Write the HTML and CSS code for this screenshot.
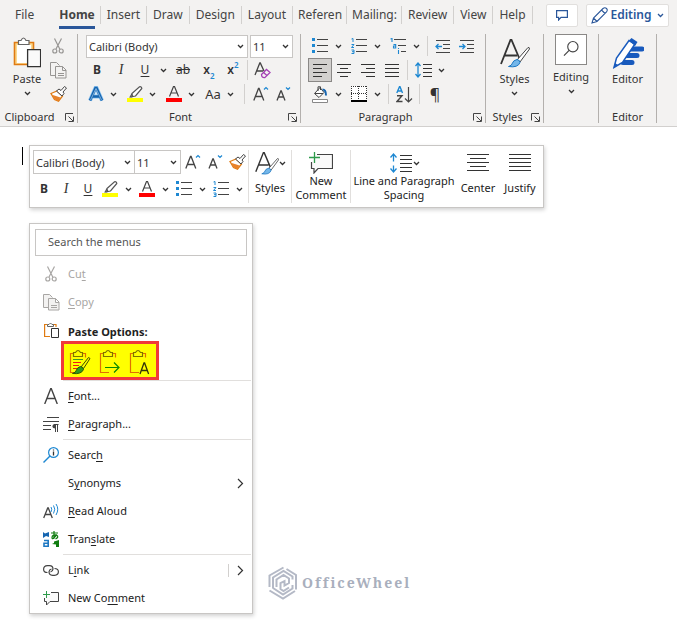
FILE: index.html
```html
<!DOCTYPE html>
<html lang="en">
<head>
<meta charset="utf-8">
<title>Document</title>
<link rel="stylesheet" href="styles.css">
</head>
<body>
<svg class="sprite" aria-hidden="true">
  <symbol id="chev" viewBox="0 0 7 5"><path d="M1 1l2.500 2.500L6 1" fill="none" stroke="#333" stroke-width="1.300"/></symbol>
  <symbol id="launch" viewBox="0 0 9 9"><path d="M.5 7.500V.5H8M3.500 3.500L8 8M8.500 3.500v5h-5" fill="none" stroke="#444"/></symbol>
  <symbol id="cut" viewBox="0 0 12 16"><g fill="none" stroke="currentColor" stroke-width="1.200"><path d="M2.500.5l5.500 11M9.500.5L4 11"/><circle cx="2.800" cy="13" r="2"/><circle cx="9.200" cy="13" r="2"/></g></symbol>
  <symbol id="copy" viewBox="0 0 17 17"><g fill="#f3f2f1" stroke="currentColor"><path d="M6 13.500H.5V.5h6l3 3"/><path d="M5.500 4.500h7l3.500 3.500v8H5.500zM12.500 4.500v4H16M8 11.500h6M8 13.500h6"/></g></symbol>
  <symbol id="brush" viewBox="0 0 17 16"><path d="M1 7.500l6-2.500 5.500 5L8.500 15.200 4.500 13.500z" fill="#fff" stroke="#e07b12" stroke-width="1.300"/><path d="M2 8.800L10.500 11.500l-2 3.500-4-1.500z" fill="#e8822a"/><path d="M6.500 5L9 3l2 1.500 3.500-4 2 1.500-3.500 4 1 1.500-2 2.500z" fill="#fff" stroke="#444"/></symbol>
  <symbol id="pen" viewBox="0 0 16 16"><path d="M5 7.500L12.500.8q2-.5 2.300 1.700L8.500 10l-3 .5zM5 7.500L3.500 10.500l2 .5" fill="#fff" stroke="#555" stroke-width="1.200"/><path d="M3.500 10L2 11.500h3z" fill="#555"/><path d="M0 12h16v4H0z" fill="#ff0"/></symbol>
  <symbol id="fontcolor" viewBox="0 0 16 16"><path d="M3.500 10.500L7.500.5h1l4 10M5 7h6" fill="none" stroke="#444" stroke-width="1.200"/><path d="M0 12h16v4H0z" fill="#f00"/></symbol>
  <symbol id="bullets" viewBox="0 0 16 16"><path d="M0 0h3v3H0zM0 6h3v3H0zM0 12h3v3H0z" fill="#1e88d2"/><path d="M5 1.500h11M5 7.500h11M5 13.500h11" stroke="#444"/></symbol>
  <symbol id="numbers" viewBox="0 0 16 16"><path d="M.5 1L2 .5V4M.5 6.500H3L.5 9.500H3M.5 12H3v3.500H.5M1 13.700h2" fill="none" stroke="#1e88d2" stroke-width="1"/><path d="M5 1.500h11M5 7.500h11M5 13.500h11" stroke="#444"/></symbol>
  <symbol id="grow" viewBox="0 0 16 16"><path d="M.8 14.500L5.500 2.500h.6l4.700 12M2.500 10.500h6.700" fill="none" stroke="#444" stroke-width="1.300"/><path d="M11 3.500l2-2 2 2" fill="none" stroke="#1e88d2" stroke-width="1.200"/></symbol>
  <symbol id="shrink" viewBox="0 0 16 16"><path d="M2 14.500L5.800 5h.5l3.700 9.500M3.500 11h5" fill="none" stroke="#444" stroke-width="1.300"/><path d="M11 1.500l2 2 2-2" fill="none" stroke="#1e88d2" stroke-width="1.200"/></symbol>
  <symbol id="styles" viewBox="0 0 30 30"><path d="M1 26L10.500 2h1L20 22M5 17.500h12" fill="none" stroke="#333" stroke-width="1.800"/><path d="M17 22L28 9.500q1.500-.5 1.500 1.500L20 24z" fill="#fff" stroke="#444"/><path d="M17 21.500q3 .5 3 3Q18 30 8.500 28.500q3.500-1 4-3.500t4.500-3.500z" fill="#74b7ea" stroke="#1e78c2"/></symbol>
  <symbol id="spacing" viewBox="0 0 24 20"><path d="M4.500 1v18M1.500 4.500l3-3.500 3 3.500M1.500 15.500l3 3.500 3-3.500" fill="none" stroke="#1e88d2" stroke-width="1.300"/><path d="M3 8.500h3v4H3z" fill="#fff"/><path d="M11 2.500h12M11 6.500h12M11 10.500h12M11 14.500h12M11 18.500h12" stroke="#333"/></symbol>
  <symbol id="comment" viewBox="0 0 24 22"><path d="M8 2.500h15.500v14H9l-4 4.500v-4.500H2.500V10" fill="#fafafa" stroke="#444" stroke-width="1.200"/><path d="M5.500 0v11M0 5.500h11" stroke="#2e9b4b" stroke-width="1.300"/></symbol>
  <symbol id="arrow" viewBox="0 0 7 11"><path d="M1 1l4.500 4.500L1 10" fill="none" stroke="#333" stroke-width="1.200"/></symbol>
  <symbol id="board" viewBox="0 0 22 26"><path d="M4.500 4.500H1.500v19H10M13 4.500h3.500v4" fill="none" stroke="#e07000" stroke-width="1.200"/><path d="M4.500 7.500v-4h2q2.500-4 5 0h2v4z" fill="none" stroke="#7f7200" stroke-width="1.200"/></symbol>
</svg>

<header class="ribbon">
  <nav class="tabs">
    <a href="#" class="tab">File</a>
    <a href="#" class="tab current"><span>Home</span></a>
    <a href="#" class="tab">Insert</a>
    <a href="#" class="tab">Draw</a>
    <a href="#" class="tab">Design</a>
    <a href="#" class="tab">Layout</a>
    <a href="#" class="tab tight">Referen</a>
    <a href="#" class="tab tight">Mailing:</a>
    <a href="#" class="tab">Review</a>
    <a href="#" class="tab">View</a>
    <a href="#" class="tab">Help</a>
    <button class="note-btn" aria-label="Comments"><svg width="12" height="11" viewBox="0 0 12 11"><path d="M.6.6h10.800v6.800H5L2.600 10V7.400h-2z" fill="none" stroke="#2b579a" stroke-width="1.200"/></svg></button>
    <button class="mode-btn"><svg width="17" height="17" viewBox="0 0 17 17"><path d="M1 16l1.500-5L12 1.500q2-1.500 3.500 0t0 3.500L6 14.500zM2.500 11L6 14.500M10.500 3L14 6.500" fill="none" stroke="#2b579a" stroke-width="1.100"/></svg>Editing<svg class="chev-blue" width="7" height="5" viewBox="0 0 7 5"><path d="M1 1l2.500 2.500L6 1" fill="none" stroke="#2b579a" stroke-width="1.300"/></svg></button>
  </nav>

  <div class="groups">
    <section class="group clipboard">
      <div class="body">
        <button class="big paste">
          <svg width="28" height="32" viewBox="0 0 28 32"><path d="M1.500 5.500h19v22h-19z" fill="#fbd98f" stroke="#e07b12" stroke-width="1.600"/><path d="M4 8h14v18H4z" fill="#fff"/><path d="M5.500 7.500v-4H8q2.500-5 5 0h3v4z" fill="#fff" stroke="#666" stroke-width="1.200"/><path d="M14.600 12.600h13v17h-13z" fill="#fafafa" stroke="#333" stroke-width="1.300"/></svg>
          <span>Paste</span><svg width="7" height="5"><use href="#chev"/></svg>
        </button>
        <div class="stack">
          <button class="tool dim" aria-label="Cut"><svg width="12" height="16"><use href="#cut"/></svg></button>
          <button class="tool dim" aria-label="Copy"><svg width="17" height="17"><use href="#copy"/></svg></button>
          <button class="tool" aria-label="Format painter"><svg width="17" height="16"><use href="#brush"/></svg></button>
        </div>
      </div>
      <h2>Clipboard<button class="launcher" aria-label="Clipboard settings"><svg width="9" height="9"><use href="#launch"/></svg></button></h2>
    </section>

    <section class="group font">
      <div class="body rows">
        <div class="row">
          <div class="combo wide"><input aria-label="Font" value="Calibri (Body)"><svg width="7" height="5"><use href="#chev"/></svg></div>
          <div class="combo size"><input aria-label="Font size" value="11"><svg width="7" height="5"><use href="#chev"/></svg></div>
        </div>
        <div class="row">
          <button class="tool b">B</button><button class="tool i">I</button><button class="tool u">U</button>
          <button class="drop" aria-label="Underline styles"><svg width="7" height="5"><use href="#chev"/></svg></button>
          <button class="tool strike">ab</button>
          <button class="tool script">x<sub>2</sub></button><button class="tool script">x<sup>2</sup></button>
          <i class="bar"></i>
          <button class="tool" aria-label="Clear formatting"><svg width="17" height="17" viewBox="0 0 17 17"><path d="M1 13L5.800 1h.5l3.700 8M3 9h6" fill="none" stroke="#444" stroke-width="1.300"/><path d="M7.500 12.500l5-5 3.500 3-5 5q-3.500.5-3.500-3zM9.500 10.500l3.500 3" fill="#f3f2f1" stroke="#a43fb5" stroke-width="1.300"/></svg></button>
        </div>
        <div class="row split">
          <button class="tool" aria-label="Text effects"><svg width="16" height="16" viewBox="0 0 16 16"><path d="M2 14.500L7.500 2h1L14 14.500M4.500 10.500h7" fill="none" stroke="#8cc3f0" stroke-width="4"/><path d="M2 14.500L7.500 2h1L14 14.500M4.500 10.500h7" fill="none" stroke="#1565b0" stroke-width="2.600"/><path d="M2.500 14L8 2.500 13.500 14" fill="none" stroke="#e8f4ff" stroke-width=".5"/></svg></button><button class="drop" aria-label="Text effect list"><svg width="7" height="5"><use href="#chev"/></svg></button>
          <button class="tool" aria-label="Highlight"><svg width="16" height="16"><use href="#pen"/></svg></button><button class="drop" aria-label="Highlight colors"><svg width="7" height="5"><use href="#chev"/></svg></button>
          <button class="tool" aria-label="Font color"><svg width="16" height="16"><use href="#fontcolor"/></svg></button><button class="drop" aria-label="Font colors"><svg width="7" height="5"><use href="#chev"/></svg></button>
          <button class="tool case">Aa</button><button class="drop" aria-label="Change case"><svg width="7" height="5"><use href="#chev"/></svg></button>
          <i class="bar"></i>
          <button class="tool" aria-label="Grow font"><svg width="16" height="16"><use href="#grow"/></svg></button><button class="tool" aria-label="Shrink font"><svg width="16" height="16"><use href="#shrink"/></svg></button>
        </div>
      </div>
      <h2>Font<button class="launcher" aria-label="Font settings"><svg width="9" height="9"><use href="#launch"/></svg></button></h2>
    </section>

    <section class="group para">
      <div class="body rows">
        <div class="row">
          <button class="tool" aria-label="Bullets"><svg width="16" height="16"><use href="#bullets"/></svg></button><button class="drop" aria-label="Bullet library"><svg width="7" height="5"><use href="#chev"/></svg></button>
          <button class="tool gap" aria-label="Numbering"><svg width="16" height="16"><use href="#numbers"/></svg></button><button class="drop" aria-label="Numbering library"><svg width="7" height="5"><use href="#chev"/></svg></button>
          <button class="tool gap" aria-label="Multilevel list"><svg width="16" height="16" viewBox="0 0 16 16"><path d="M.5 1L2 .5V4M3.500 6.500h2.200V10H3.500V8h2M8.500 12v4M8.500 10v1" fill="none" stroke="#1e88d2" stroke-width="1.100"/><path d="M4 1.500h12M8 7.500h8M11 13.500h5" stroke="#444"/></svg></button><button class="drop" aria-label="List library"><svg width="7" height="5"><use href="#chev"/></svg></button>
          <i class="bar wide-bar"></i>
          <button class="tool" aria-label="Decrease indent"><svg width="16" height="14" viewBox="0 0 16 14"><path d="M1 1.500h14M8 5.500h7M8 9.500h7M1 13.500h14" stroke="#444"/><path d="M7 7.500H1M3.500 5L1 7.500 3.500 10" fill="none" stroke="#1e88d2" stroke-width="1.300"/></svg></button>
          <button class="tool" aria-label="Increase indent"><svg width="16" height="14" viewBox="0 0 16 14"><path d="M1 1.500h14M8 5.500h7M8 9.500h7M1 13.500h14" stroke="#444"/><path d="M0 7.500h6M3.500 5L6 7.500 3.500 10" fill="none" stroke="#1e88d2" stroke-width="1.300"/></svg></button>
        </div>
        <div class="row">
          <button class="tool on" aria-label="Align left"><svg width="14" height="14" viewBox="0 0 14 14"><path d="M0 1.500h14M0 5.500h9M0 9.500h14M0 13.500h9" stroke="#333"/></svg></button>
          <button class="tool" aria-label="Center"><svg width="14" height="14" viewBox="0 0 14 14"><path d="M0 1.500h14M3 5.500h8M0 9.500h14M3 13.500h8" stroke="#333"/></svg></button>
          <button class="tool" aria-label="Align right"><svg width="14" height="14" viewBox="0 0 14 14"><path d="M0 1.500h14M5 5.500h9M0 9.500h14M5 13.500h9" stroke="#333"/></svg></button>
          <button class="tool" aria-label="Justify"><svg width="14" height="14" viewBox="0 0 14 14"><path d="M0 1.500h14M0 5.500h14M0 9.500h14M0 13.500h14" stroke="#333"/></svg></button>
          <i class="bar"></i>
          <button class="tool" aria-label="Line spacing"><svg width="17" height="16" viewBox="0 0 17 16"><path d="M3 1v14M.5 4L3 1l2.500 3M.5 12L3 15l2.500-3" fill="none" stroke="#1e88d2" stroke-width="1.300"/><path d="M8 2.500h9M8 6.500h9M8 10.500h9M8 14.500h9" stroke="#333"/></svg></button><button class="drop" aria-label="Spacing options"><svg width="7" height="5"><use href="#chev"/></svg></button>
        </div>
        <div class="row">
          <button class="tool" aria-label="Shading"><svg width="16" height="17" viewBox="0 0 16 17"><path d="M2.500 7.500l5.500-6 4 5-5 5zM6 5V.8h2.500V4M3 7.500h8" fill="#fff" stroke="#444"/><path d="M10.500 3.500q3.500 0 3.500 6" fill="none" stroke="#1565b0" stroke-width="2"/><path d="M.5 13.500h15v3H.5z" fill="#fff" stroke="#888"/></svg></button><button class="drop" aria-label="Shading colors"><svg width="7" height="5"><use href="#chev"/></svg></button>
          <button class="tool gap" aria-label="Borders"><svg width="16" height="16" viewBox="0 0 16 16"><path d="M0 0h16v15H0z" fill="#fff"/><path d="M0 .5h16M0 7.500h16M.5 0v15M15.500 0v15M7.500 0v15" stroke="#333" stroke-dasharray="1 1"/><path d="M0 15h16" stroke="#000" stroke-width="2"/></svg></button><button class="drop" aria-label="Border options"><svg width="7" height="5"><use href="#chev"/></svg></button>
          <i class="bar wide-bar"></i>
          <button class="tool" aria-label="Sort"><svg width="17" height="17" viewBox="0 0 17 17"><path d="M.8 7L3.500.8h.5L6.500 7M1.500 5h4.500" fill="none" stroke="#1e88d2" stroke-width="1.400"/><path d="M1 9.700h5L1 15.500h5.500" fill="none" stroke="#444" stroke-width="1.400"/><path d="M12.500 1v15M9 12.500l3.500 3.500 3.500-3.500" fill="none" stroke="#444" stroke-width="1.200"/></svg></button>
          <i class="bar"></i>
          <button class="tool pilcrow">¶</button>
        </div>
      </div>
      <h2>Paragraph<button class="launcher" aria-label="Paragraph settings"><svg width="9" height="9"><use href="#launch"/></svg></button></h2>
    </section>

    <section class="group styles">
      <div class="body"><button class="big"><svg width="30" height="32"><use href="#styles"/></svg><span>Styles</span><svg width="7" height="5"><use href="#chev"/></svg></button></div>
      <h2>Styles<button class="launcher" aria-label="Styles settings"><svg width="9" height="9"><use href="#launch"/></svg></button></h2>
    </section>
    <section class="group editing">
      <div class="body"><button class="big boxed"><svg class="frame" width="32" height="31" viewBox="0 0 32 31"><circle cx="18" cy="12.500" r="5.500" fill="none" stroke="#444" stroke-width="1.200"/><path d="M14 16.500L8.500 22" stroke="#444" stroke-width="1.300"/></svg><span>Editing</span><svg width="7" height="5"><use href="#chev"/></svg></button></div>
    </section>
    <section class="group editor">
      <div class="body"><button class="big"><svg width="32" height="32" viewBox="0 0 32 32"><path d="M19 12h11M15 18.500h10M11 25.500h9" stroke="#185abd" stroke-width="5" stroke-linecap="round"/><path d="M2 30.500L4.500 21 17 3.500 23 7 10.500 25.500z" fill="#fff" stroke="#185abd" stroke-width="1.500"/><path d="M17 3.500l2.500-2.500 6 4-2.500 4z" fill="#185abd"/><path d="M1.500 31l1.500-5 3 2z" fill="#185abd"/></svg><span>Editor</span></button></div>
      <h2>Editor</h2>
    </section>
  </div>
</header>

<main class="page">
  <div class="line">
    <i class="caret"></i>
    <div class="mini">
      <div class="mini-tools">
        <div class="row">
          <div class="combo wide"><input aria-label="Font" value="Calibri (Body)"><svg width="7" height="5"><use href="#chev"/></svg></div>
          <div class="combo size"><input aria-label="Font size" value="11"><svg width="7" height="5"><use href="#chev"/></svg></div>
          <button class="tool" aria-label="Grow font"><svg width="16" height="16"><use href="#grow"/></svg></button><button class="tool" aria-label="Shrink font"><svg width="16" height="16"><use href="#shrink"/></svg></button><button class="tool" aria-label="Format painter"><svg width="17" height="16"><use href="#brush"/></svg></button>
        </div>
        <div class="row">
          <button class="tool b">B</button><button class="tool i">I</button><button class="tool u">U</button>
          <button class="tool" aria-label="Highlight"><svg width="16" height="16"><use href="#pen"/></svg></button><button class="drop" aria-label="Highlight colors"><svg width="7" height="5"><use href="#chev"/></svg></button>
          <button class="tool" aria-label="Font color"><svg width="16" height="16"><use href="#fontcolor"/></svg></button><button class="drop" aria-label="Font colors"><svg width="7" height="5"><use href="#chev"/></svg></button>
          <button class="tool" aria-label="Bullets"><svg width="16" height="16"><use href="#bullets"/></svg></button><button class="drop" aria-label="Bullet library"><svg width="7" height="5"><use href="#chev"/></svg></button>
          <button class="tool" aria-label="Numbering"><svg width="16" height="16"><use href="#numbers"/></svg></button><button class="drop" aria-label="Numbering library"><svg width="7" height="5"><use href="#chev"/></svg></button>
        </div>
      </div>
      <button class="card c-styles"><span class="pic"><svg width="24" height="24"><use href="#styles"/></svg><svg width="7" height="5"><use href="#chev"/></svg></span><span class="cap">Styles</span></button>
      <button class="card c-new"><span class="pic"><svg width="24" height="22"><use href="#comment"/></svg></span><span class="cap">New<br>Comment</span></button>
      <button class="card c-line"><span class="pic"><svg width="24" height="20"><use href="#spacing"/></svg><svg width="7" height="5"><use href="#chev"/></svg></span><span class="cap">Line and Paragraph<br>Spacing</span></button>
      <button class="card c-last"><span class="pic"><svg width="22" height="18" viewBox="0 0 22 18"><path d="M0 .5h22M3 4.500h16M0 8.500h22M3 12.500h16M0 16.500h22" stroke="#333"/></svg></span><span class="cap">Center</span></button>
      <button class="card c-last"><span class="pic"><svg width="22" height="18" viewBox="0 0 22 18"><path d="M0 .5h22M0 4.500h22M0 8.500h22M0 12.500h22M0 16.500h22" stroke="#333"/></svg></span><span class="cap">Justify</span></button>
    </div>
  </div>

  <div class="lower">
    <div class="menu">
      <input class="search" placeholder="Search the menus" aria-label="Search the menus">
      <button class="item off"><span class="ico"><svg width="12" height="16"><use href="#cut"/></svg></span><span>Cu<u>t</u></span></button>
      <button class="item off"><span class="ico"><svg width="17" height="17"><use href="#copy"/></svg></span><span><u>C</u>opy</span></button>
      <div class="item title"><span class="ico"><svg width="15" height="16" viewBox="0 0 15 16"><path d="M3.500 2.500H.6v12H6M9 2.500h3V5" fill="none" stroke="#e07b12" stroke-width="1.200"/><path d="M3.500 4.500v-2H5q1.500-3 3 0h1.500v2z" fill="#fff" stroke="#666"/><path d="M7.500 6.500h7v9h-7z" fill="#fff" stroke="#333"/></svg></span><span>Paste Options:</span></div>
      <div class="pastes">
        <button aria-label="Keep source formatting"><svg width="22" height="26" viewBox="0 0 22 26"><use href="#board" width="22" height="26"/><path d="M4 10.500h10" stroke="#3f9a20"/><path d="M4 13.500h8M4 16.500h6M4 19.500h4" stroke="#f01818"/><path d="M12 18l7.500-9.500 1.500 1-6.500 10z" fill="#ff0" stroke="#3c4a00"/><path d="M11.500 17.500q3 .5 3 3-2 5-11 4 3.500-1 4-3.500t4-3.500z" fill="#2f9a1f" stroke="#2a5a00"/></svg></button>
        <button aria-label="Merge formatting"><svg width="22" height="26" viewBox="0 0 22 26"><use href="#board" width="22" height="26"/><path d="M6 18.500h14M15 13.500l5 5-5 5" fill="none" stroke="#0a8a00" stroke-width="1.200"/></svg></button>
        <button aria-label="Keep text only"><svg width="22" height="26" viewBox="0 0 22 26"><use href="#board" width="22" height="26"/><path d="M11 25l4-11h.6l4 11M12.500 21.500h6" fill="none" stroke="#33330a" stroke-width="1.300"/></svg></button>
      </div>
      <hr>
      <button class="item"><span class="ico"><svg width="14" height="16" viewBox="0 0 14 16"><path d="M.7 16L6.700.7h.6L13.300 16M3 10.500h8" fill="none" stroke="#444" stroke-width="1.400"/></svg></span><span><u>F</u>ont...</span></button>
      <button class="item"><span class="ico"><svg width="16" height="15" viewBox="0 0 16 15"><path d="M4 .5h12M0 4.500h16M0 8.500h8M0 12.500h8" stroke="#444"/><path d="M15.500 7.500h-4.500M12.500 7.500v7.500M14.500 7.500v7.500" fill="none" stroke="#444"/><path d="M12.500 7q-3 0-3 2.200t3 2.300z" fill="#444"/></svg></span><span><u>P</u>aragraph...</span></button>
      <hr>
      <button class="item"><span class="ico"><svg width="16" height="16" viewBox="0 0 16 16"><circle cx="10.500" cy="5.500" r="4.900" fill="#fff" stroke="#1e88d2" stroke-width="1.200"/><path d="M7 9L.5 15.500" stroke="#1e88d2" stroke-width="1.400"/><path d="M10.500 2.500v1M10.500 4.500v4" stroke="#333" stroke-width="1.300"/></svg></span><span>Searc<u>h</u></span></button>
      <button class="item"><span class="ico"></span><span>S<u>y</u>nonyms</span><svg class="more" width="7" height="11"><use href="#arrow"/></svg></button>
      <button class="item"><span class="ico"><svg width="16" height="16" viewBox="0 0 16 16"><path d="M.7 15L4.700 5h.6l4 10M2.200 11.500h5.600" fill="none" stroke="#444" stroke-width="1.300"/><path d="M8 4q1.500 2 0 5M10.500 2.500q2.500 3.500 0 8M13 1q3.500 5 0 11" fill="none" stroke="#1e88d2"/></svg></span><span><u>R</u>ead Aloud</span></button>
      <button class="item"><span class="ico"><svg width="16" height="16" viewBox="0 0 16 16"><path d="M0 1l2 1.500L6 1v5l-3-1-3 2z" fill="#1565b0"/><path d="M1 9.500h4.200v5.700H1v-3h4" fill="none" stroke="#1e78c2" stroke-width="1.600"/><path d="M8 2h7M11 0v8M14 4q-5-.5-5 2.500T13.500 4q3 2-1 4" fill="none" stroke="#107c10" stroke-width="1.200"/><path d="M16 9l-5 1.500v1.500l-2 1 4 .5V16h3z" fill="#107c10"/></svg></span><span>Tran<u>s</u>late</span></button>
      <hr>
      <button class="item"><span class="ico"><svg width="16" height="11" viewBox="0 0 16 11"><path d="M4.500 7.500Q.6 7.500.6 4.200T4.500.7h2q3.500 0 3.500 3.500-.3 2.300-2.500 2.800M11.500 3.500q3.900 0 3.900 3.300t-3.900 3.500h-2Q6 10.300 6 6.800q.3-2.300 2.500-2.800" fill="none" stroke="#444" stroke-width="1.200"/></svg></span><span>L<u>i</u>nk</span><i class="rule"></i><svg class="more" width="7" height="11"><use href="#arrow"/></svg></button>
      <button class="item"><span class="ico"><svg width="16" height="15" viewBox="0 0 16 15"><path d="M8 1.500h7.500v9H7L3.500 14v-3.500h-2V7" fill="#fafafa" stroke="#444"/><path d="M3.500 0v7M0 3.500h7" stroke="#2e9b4b"/></svg></span><span>New Co<u>m</u>ment</span></button>
    </div>
    <div class="brand">
      <svg width="30" height="34" viewBox="0 0 30 34"><g fill="none" stroke="#b4b9c6" stroke-width="2"><path d="M1.500 21V9.500L15.500 1.500M18.500 3L28 9v14.500"/><path d="M1.500 24.500L15 32.500l12-7.500"/><path d="M5 22.500V11.500L15.500 5l9 5.500v3"/><path d="M5 22l10 6.500 9.500-6V19"/><path d="M8.500 21v-7.500L15.500 9l5.500 3.500v4.500l-4.500 2.500v-4.500l-4 2v6l3 2 5.500-3.500"/></g></svg>
      <span>OfficeWheel</span>
    </div>
  </div>
</main>
</body>
</html>
```

FILE: styles.css
```css
* { box-sizing: border-box; }
body {
  margin: 0;
  background: #fff;
  color: #333;
  font: 11px/14px "Noto Sans", "Open Sans", sans-serif;
}
svg { display: block; flex: none; }
.sprite { position: absolute; width: 0; height: 0; }
button {
  display: flex;
  align-items: center;
  justify-content: center;
  padding: 0;
  border: 0;
  background: none;
  color: inherit;
  font: inherit;
}
input { font: inherit; color: inherit; outline: 0; }
u { text-underline-offset: 2px; }

/* Ribbon */
.ribbon { background: #f3f2f1; border-bottom: 1px solid #d2d0ce; }
.tabs {
  display: flex;
  align-items: center;
  height: 30px;
  padding-left: 9px;
  color: #444;
  font-size: 12px;
  line-height: 16px;
}
.tab {
  height: 18px;
  padding: 1px 6px;
  border-right: 1px solid #d2d0ce;
  color: inherit;
  text-decoration: none;
  white-space: nowrap;
}
.tab:first-child { border: 0; margin-right: 14px; }
.tab.current { padding: 1px 5px; font-weight: 700; }
.tab.current span { display: block; padding-bottom: 3px; border-bottom: 3px solid #2b579a; }
.tab.tight { padding: 1px 4px 1px 5px; }
.note-btn, .mode-btn { height: 23px; background: #fff; border: 1px solid #e1dfdd; border-radius: 2px; }
.note-btn { width: 32px; margin-left: 13px; }
.mode-btn { width: 83px; margin-left: 8px; gap: 3px; color: #2b579a; font-weight: 600; }
.mode-btn .chev-blue { margin-left: 2px; }

.groups { display: flex; padding: 4px 0 3px; }
.group {
  display: flex;
  flex-direction: column;
  height: 89px;
  border-right: 1px solid #b3b0ad;
}
.group .body { display: flex; flex: 1; }
.group h2 {
  position: relative;
  margin: 0;
  font-size: 11px;
  font-weight: 400;
  line-height: 12px;
  text-align: center;
}
.launcher { position: absolute; right: 3px; bottom: 1px; }
.clipboard { width: 78px; }
.clipboard h2 { padding-right: 18px; }
.font { width: 223px; }
.font h2 { padding-right: 17px; }
.para { width: 185px; }
.para h2 { padding-right: 15px; }
.styles { width: 58px; }
.styles h2 { padding-right: 14px; }
.editing { width: 55px; }
.editor { width: 58px; }
.big { flex: 1; flex-direction: column; justify-content: flex-start; gap: 3px; padding-top: 3px; }
.boxed { gap: 5px; padding-top: 0; }
.frame { background: #fff; border: 1px solid #8a8886; }
.paste { padding-left: 12px; }
.stack { width: 35px; padding-right: 3px; }
.stack .tool { width: 32px; }
.big span { line-height: 14px; margin-bottom: 2px; }
.boxed span { margin-bottom: 0; }
.dim { color: #979593; }

.rows { flex-direction: column; padding-left: 7px; }
.row { display: flex; align-items: center; height: 24px; }
.tool { width: 24px; height: 24px; flex: none; }
.drop { width: 12px; height: 20px; flex: none; }
.gap { margin-left: 3px; }
.bar { width: 1px; height: 20px; margin: 0 2px; background: #d2d0ce; }
.para .bar { margin: 0 3px; }
.para .wide-bar { margin-left: 5px; }
.b { font-size: 12px; font-weight: 700; }
.i { font: italic 14px "Liberation Serif", serif; }
.u { font-size: 12px; text-decoration: underline; text-underline-offset: 2px; }
.strike { width: 28px; font-size: 12px; text-decoration: line-through; }
.script { font-size: 12px; font-weight: 600; }
.script sub, .script sup { color: #1e88d2; font-size: 8px; line-height: 8px; }
.script sub { align-self: flex-end; margin-bottom: 2px; }
.script sup { align-self: flex-start; margin-top: 3px; }
.split .tool { width: 22px; }
.split .drop { margin-right: 5px; }
.split .bar { margin: 0 5px 0 3px; }
.case { font-size: 13px; }
.pilcrow { font-size: 16px; }
.on { background: #d2d0ce; outline: 1px solid #8a8886; outline-offset: -1px; }

.combo {
  display: flex;
  align-items: center;
  height: 23px;
  padding-right: 3px;
  border: 1px solid #c8c6c4;
  background: #fff;
}
.combo input { flex: 1; min-width: 0; height: 20px; padding: 0 2px; border: 0; background: none; }
.font .wide { width: 162px; margin-left: 1px; }
.font .size { width: 43px; margin-left: 2px; }

/* Document */
.page { padding: 18px 22px 6px; }
.line { display: flex; }
.caret { width: 1px; height: 18px; margin: 2px 6px 0 0; background: #000; }
.mini {
  display: flex;
  height: 63px;
  border: 1px solid #c8c6c4;
  background: #fff;
  box-shadow: 1px 2px 4px rgba(0, 0, 0, .18);
}
.mini-tools { display: flex; flex-direction: column; gap: 3px; padding: 4px 0 4px 3px; }
.mini .combo { height: 24px; }
.mini-tools .wide { width: 102px; }
.mini-tools .size { width: 47px; margin-left: -1px; margin-right: 1px; }
.mini-tools .tool { width: 22px; }
.mini-tools .drop { width: 15px; }
.card {
  flex-direction: column;
  justify-content: flex-start;
  margin: 4px 0;
  padding-top: 2px;
  color: #222;
  line-height: 14px;
  border-left: 1px solid #e1dfdd;
}
.pic { display: flex; align-items: center; justify-content: center; height: 22px; }
.cap { display: flex; align-items: center; justify-content: center; height: 28px; white-space: nowrap; }
.c-styles { width: 43px; }
.c-new { width: 59px; }
.c-line { width: 107px; }
.c-last { width: 42px; border: 0; }
.c-last:last-child { margin-right: 2px; }

.lower { display: flex; align-items: flex-end; padding: 15px 0 0 7px; }
.menu {
  width: 224px;
  padding: 5px 0 1px;
  border: 1px solid #c8c6c4;
  background: #fff;
  color: #222;
  box-shadow: 1px 2px 4px rgba(0, 0, 0, .18);
}
.search {
  display: block;
  width: calc(100% - 10px);
  height: 27px;
  margin: 0 5px 4px;
  padding: 0 12px 2px;
  border: 1px solid #c8c6c4;
}
.search::placeholder { color: #555; opacity: 1; }
.item { display: flex; align-items: center; justify-content: flex-start; width: 100%; height: 28px; }
.off { color: #a8a6a4; }
.ico { display: flex; justify-content: center; width: 16px; margin: 0 9px 0 13px; }
.title { height: 25px; padding-top: 6px; font-weight: 700; }
.title .ico { padding-bottom: 4px; }
.more { margin-left: auto; margin-right: 8px; }
.rule { width: 1px; height: 13px; margin-left: auto; background: #d2d0ce; }
.rule + .more { margin-left: 8px; }
.pastes {
  display: flex;
  gap: 8px;
  width: 98px;
  height: 39px;
  margin-left: 31px;
  padding: 2px 5px 0;
  border: 3px solid #f03a3a;
  background: #ff0;
}
.menu hr { height: 1px; margin: 0 1px 1px 33px; border: 0; background: #e1dfdd; }
.menu .item + hr { margin-top: 1px; }

.brand {
  display: flex;
  align-items: center;
  gap: 4px;
  margin: 0 0 14px 15px;
  color: #a9afbd;
  font: bold 14px/18px "Noto Serif", "Liberation Serif", serif;
  letter-spacing: 2px;
}
```
